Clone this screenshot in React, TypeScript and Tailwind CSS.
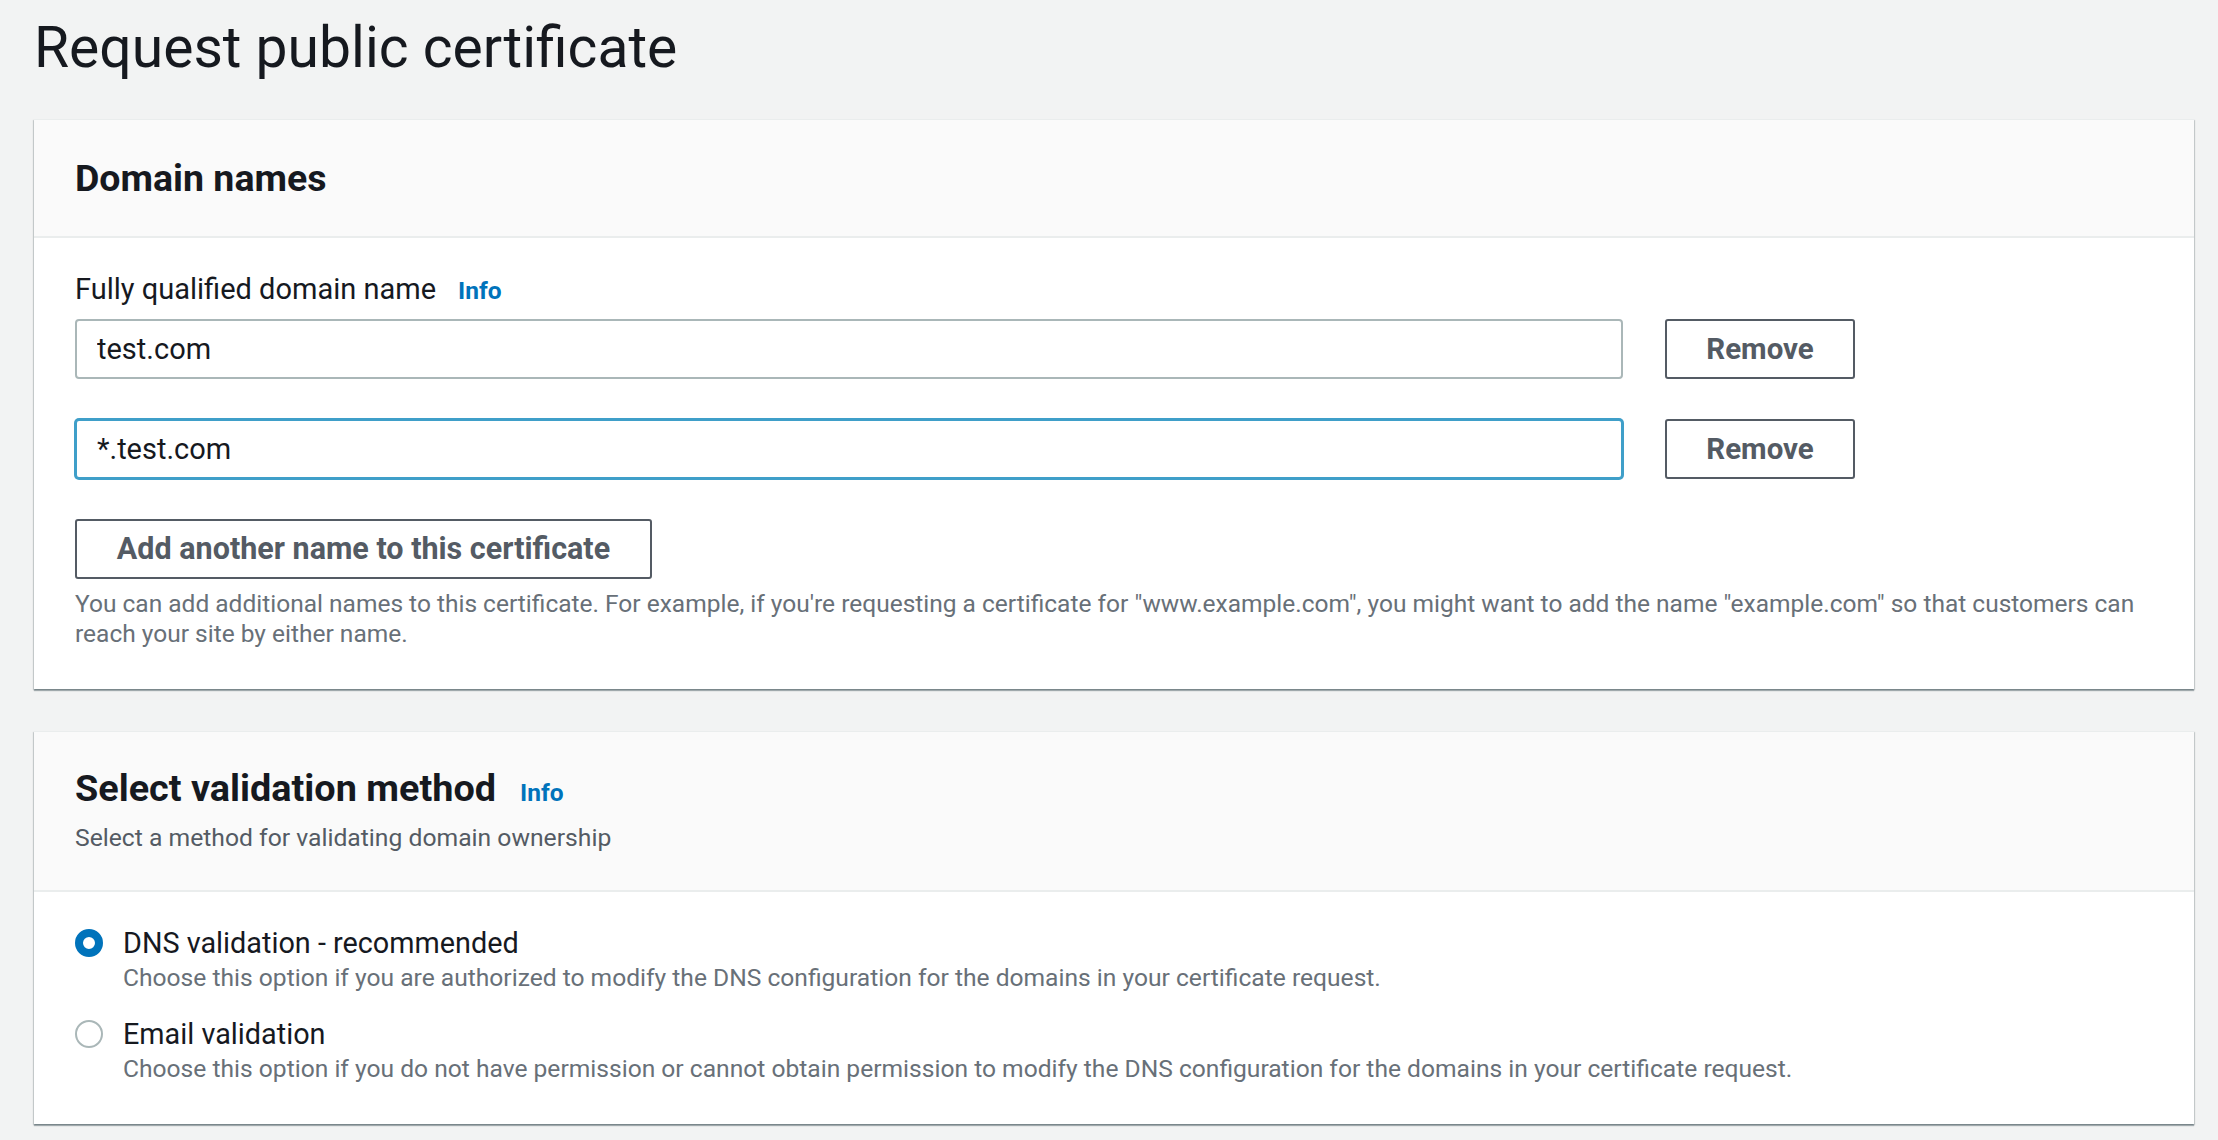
import React from "react";

const cardShadow =
  "shadow-[0_2px_1px_0_rgba(0,28,36,0.3),1px_1px_1px_0_rgba(0,28,36,0.15),-1px_1px_1px_0_rgba(0,28,36,0.15)]";

function DomainRow({ value, focused }: { value: string; focused?: boolean }) {
  return (
    <div className="flex items-center gap-[42px]">
      <input
        readOnly
        value={value}
        className={
          focused
            ? "h-[60px] w-[1548px] rounded-[4px] border-2 border-[#3f9fc9] bg-white px-[20px] text-[29px] text-[#16191f] shadow-[0_0_0_1px_#3f9fc9] outline-none"
            : "h-[60px] w-[1548px] rounded-[4px] border-2 border-[#aab7b8] bg-white px-[20px] text-[29px] text-[#16191f] outline-none"
        }
      />
      <button className="flex h-[60px] w-[190px] items-center justify-center rounded-[3px] border-2 border-[#545b64] bg-white text-[29.5px] font-bold text-[#545b64]">
        Remove
      </button>
    </div>
  );
}

function RadioOption({
  checked,
  label,
  description,
}: {
  checked?: boolean;
  label: string;
  description: string;
}) {
  return (
    <div className="flex gap-[20px]">
      <div className="flex h-[40px] items-center">
        {checked ? (
          <span className="block h-[28px] w-[28px] rounded-full border-[8px] border-[#0073bb] bg-white" />
        ) : (
          <span className="block h-[28px] w-[28px] rounded-full border-2 border-[#aab7b8] bg-white" />
        )}
      </div>
      <div className="flex flex-col">
        <span className="text-[28.8px] leading-[40px] text-[#16191f]">{label}</span>
        <span className="text-[24.6px] leading-[30px] text-[#687078]">{description}</span>
      </div>
    </div>
  );
}

export default function App() {
  return (
    <div className="min-h-[1140px] w-full bg-[#f2f3f3] pl-[34px] pr-[24px] pt-[14px] pb-[17px] font-['Roboto',sans-serif] text-[#16191f]">
      <h1 className="text-[57px] font-normal leading-[68px] text-[#16191f]">Request public certificate</h1>

      <section className={"mt-[37px] border-t border-[#eaeded] bg-white " + cardShadow}>
        <div className="flex h-[118px] items-center border-b-2 border-[#eaeded] bg-[#fafafa] px-[41px]">
          <h2 className="text-[37.5px] font-bold leading-[44px] text-[#16191f]">Domain names</h2>
        </div>
        <div className="px-[41px] pb-[40px] pt-[29px]">
          <div className="flex h-[44px] items-baseline gap-[22px] leading-[44px]">
            <span className="text-[29px] text-[#16191f]">Fully qualified domain name</span>
            <a className="text-[24.5px] font-bold text-[#0073bb]">Info</a>
          </div>
          <div className="mt-[8px] flex flex-col gap-[40px]">
            <DomainRow value="test.com" />
            <DomainRow value="*.test.com" focused />
          </div>
          <button className="mt-[40px] flex h-[60px] w-[577px] items-center justify-center rounded-[3px] border-2 border-[#545b64] bg-white text-[30.5px] font-bold text-[#545b64]">
            Add another name to this certificate
          </button>
          <p className="mt-[10px] text-[24.5px] leading-[30px] text-[#687078]">
            You can add additional names to this certificate. For example, if you're requesting a certificate for
            "www.example.com", you might want to add the name "example.com" so that customers can
            <br />
            reach your site by either name.
          </p>
        </div>
      </section>

      <section className={"mt-[42px] border-t border-[#eaeded] bg-white " + cardShadow}>
        <div className="border-b-2 border-[#eaeded] bg-[#fafafa] px-[41px] pb-[37px] pt-[34px]">
          <div className="flex items-baseline gap-[24px]">
            <h2 className="text-[37.8px] font-bold leading-[44px] text-[#16191f]">Select validation method</h2>
            <a className="text-[24.5px] font-bold text-[#0073bb]">Info</a>
          </div>
          <p className="mt-[11px] text-[24.7px] leading-[30px] text-[#545b64]">
            Select a method for validating domain ownership
          </p>
        </div>
        <div className="flex flex-col gap-[21px] px-[41px] pb-[40px] pt-[31px]">
          <RadioOption
            checked
            label="DNS validation - recommended"
            description="Choose this option if you are authorized to modify the DNS configuration for the domains in your certificate request."
          />
          <RadioOption
            label="Email validation"
            description="Choose this option if you do not have permission or cannot obtain permission to modify the DNS configuration for the domains in your certificate request."
          />
        </div>
      </section>
    </div>
  );
}
